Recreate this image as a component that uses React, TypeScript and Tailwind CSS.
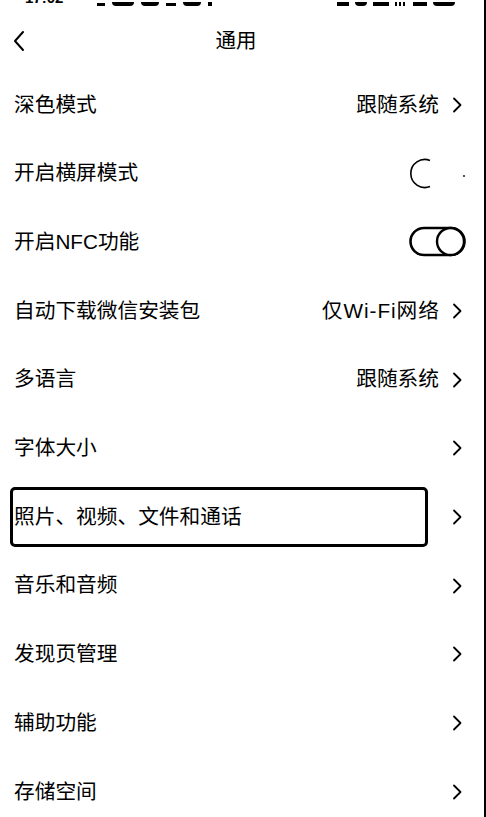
type Row = {
  label: string
  value?: string
  toggle?: 'on' | 'off'
  boxed?: boolean
}

const rows: Row[] = [
  { label: '深色模式', value: '跟随系统' },
  { label: '开启横屏模式', toggle: 'off' },
  { label: '开启NFC功能', toggle: 'on' },
  { label: '自动下载微信安装包', value: '仅Wi-Fi网络' },
  { label: '多语言', value: '跟随系统' },
  { label: '字体大小' },
  { label: '照片、视频、文件和通话', boxed: true },
  { label: '音乐和音频' },
  { label: '发现页管理' },
  { label: '辅助功能' },
  { label: '存储空间' },
]

function Chevron() {
  return (
    <svg width="10" height="16" viewBox="0 0 10 16" className="ml-[13px] shrink-0">
      <path d="M2 1.5 L8.5 8 L2 14.5" fill="none" stroke="#000" strokeWidth="1.8" strokeLinecap="round" strokeLinejoin="round" />
    </svg>
  )
}

function Toggle({ on }: { on: boolean }) {
  if (on) {
    return (
      <svg width="58" height="32" viewBox="0 0 58 32" className="mr-[-5px] shrink-0">
        <rect x="1.5" y="2" width="54" height="27" rx="13.5" fill="none" stroke="#000" strokeWidth="2.6" />
        <circle cx="41.5" cy="15.5" r="13.5" fill="#fff" stroke="#000" strokeWidth="2.4" />
      </svg>
    )
  }
  return (
    <svg width="58" height="32" viewBox="0 0 58 32" className="mr-[-5px] shrink-0">
      <path d="M21 2.5 A14 14 0 1 0 21 28.5" fill="none" stroke="#000" strokeWidth="1.6" />
      <circle cx="55" cy="18" r="0.9" fill="#000" />
    </svg>
  )
}

export default function App() {
  return (
    <div
      className="w-[486px] h-[817px] overflow-hidden bg-white flex text-black"
      style={{ fontFamily: '"Liberation Sans", "Noto Sans CJK SC", sans-serif' }}
    >
      <div className="w-[484px] flex flex-col shrink-0">
        {/* status bar, mostly cut off */}
        <div className="h-[6px] shrink-0 overflow-hidden flex items-end">
          <div className="flex items-end w-full">
            <span className="ml-[25px] text-[15px] leading-none font-semibold mb-[1px]">17:02</span>
            <div className="flex items-end gap-[7px] ml-[34px] h-[4px]">
              <div className="w-[8px] h-[3px] bg-black" />
              <div className="w-[22px] h-[4px] bg-black rounded-b-sm" />
              <div className="w-[18px] h-[4px] bg-black rounded-b-full" />
              <div className="w-[10px] h-[3px] bg-black" />
              <div className="w-[18px] h-[4px] bg-black rounded-b-full" />
              <div className="w-[4px] h-[4px] bg-black" />
            </div>
            <div className="flex items-end gap-[6px] ml-auto mr-[29px] h-[4px]">
              <div className="w-[12px] h-[4px] bg-black" />
              <div className="w-[12px] h-[4px] bg-black rounded-b-full" />
              <div className="w-[16px] h-[4px] bg-black" />
              <div className="w-[12px] h-[4px] bg-[repeating-linear-gradient(90deg,#000_0_2px,#fff_2px_4px)]" />
              <div className="w-[14px] h-[4px] bg-black" />
              <div className="w-[22px] h-[4px] bg-black rounded-b-sm" />
            </div>
          </div>
        </div>

        {/* header */}
        <div className="h-[64.65px] shrink-0 w-[472px] flex items-center pt-[5px]">
          <svg width="14" height="22" viewBox="0 0 14 22" className="ml-[12px] shrink-0">
            <path d="M11 2 L3 11 L11 20" fill="none" stroke="#000" strokeWidth="2" strokeLinecap="round" strokeLinejoin="round" />
          </svg>
          <div className="flex-1 text-center text-[20.5px] leading-none mr-[26px]">通用</div>
        </div>

        {/* list */}
        <div className="flex flex-col w-[472px] shrink-0">
          {rows.map((row, i) => (
            <div key={i} className="h-[68.7px] shrink-0 flex items-center pl-[14px] pr-[10px] text-[20.7px] leading-none">
              {row.boxed ? (
                <div className="ml-[-4px] w-[418px] h-[60px] border-[3px] border-black rounded-[5px] flex items-center pl-[1px]">
                  {row.label}
                </div>
              ) : (
                <span>{row.label}</span>
              )}
              <div className="ml-auto flex items-center">
                {row.value && (
                  <span className={row.value.includes('Wi') ? 'tracking-[1px] mr-[-1px]' : ''}>{row.value}</span>
                )}
                {row.toggle ? <Toggle on={row.toggle === 'on'} /> : <Chevron />}
              </div>
            </div>
          ))}
        </div>
      </div>
      <div className="w-[2px] h-full bg-black shrink-0" />
    </div>
  )
}
